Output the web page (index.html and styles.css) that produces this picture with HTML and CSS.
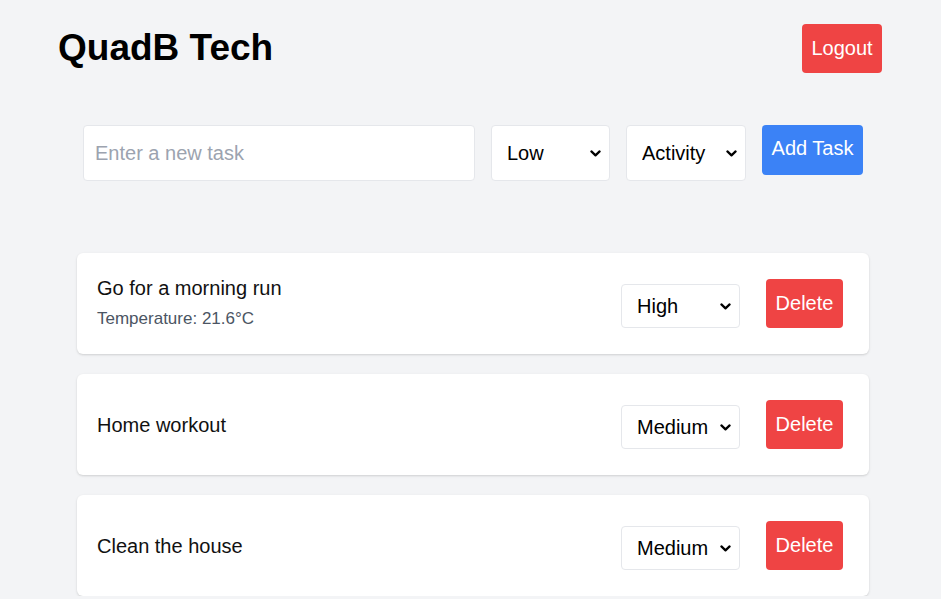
FILE: index.html
```html
<!DOCTYPE html>
<html lang="en">
<head>
<meta charset="utf-8">
<title>QuadB Tech</title>
<link rel="stylesheet" href="styles.css">
</head>
<body>
<div class="page">
  <header class="header">
    <h1 class="title">QuadB Tech</h1>
    <button class="btn btn-red btn-logout">Logout</button>
  </header>

  <form class="task-form" onsubmit="return false">
    <input class="task-input" type="text" placeholder="Enter a new task">
    <select class="select select-lg select-priority">
      <option>Low</option>
      <option>Medium</option>
      <option>High</option>
    </select>
    <select class="select select-lg select-type">
      <option>Activity</option>
      <option>Chore</option>
    </select>
    <button class="btn btn-blue" type="button">Add Task</button>
  </form>

  <ul class="task-list">
    <li class="task-card">
      <div class="task-info task-info-two">
        <div class="task-name">Go for a morning run</div>
        <div class="task-meta">Temperature: 21.6°C</div>
      </div>
      <div class="task-actions">
        <select class="select select-sm">
          <option>Low</option>
          <option>Medium</option>
          <option selected>High</option>
        </select>
        <button class="btn btn-red btn-delete">Delete</button>
      </div>
    </li>
    <li class="task-card">
      <div class="task-info">
        <div class="task-name">Home workout</div>
      </div>
      <div class="task-actions">
        <select class="select select-sm">
          <option>Low</option>
          <option selected>Medium</option>
          <option>High</option>
        </select>
        <button class="btn btn-red btn-delete">Delete</button>
      </div>
    </li>
    <li class="task-card">
      <div class="task-info">
        <div class="task-name">Clean the house</div>
      </div>
      <div class="task-actions">
        <select class="select select-sm">
          <option>Low</option>
          <option selected>Medium</option>
          <option>High</option>
        </select>
        <button class="btn btn-red btn-delete">Delete</button>
      </div>
    </li>
  </ul>
</div>
</body>
</html>
```

FILE: styles.css
```css
* {
  box-sizing: border-box;
}

html, body {
  margin: 0;
  padding: 0;
  background: #f3f4f6;
  font-family: "Liberation Sans", Arial, sans-serif;
  color: #000;
}

.page {
  padding: 24px 59px 0 58px;
}

.header {
  display: flex;
  justify-content: space-between;
  align-items: flex-start;
}

.title {
  margin: 4px 0 0 0;
  font-size: 37px;
  line-height: 40px;
  font-weight: 700;
  color: #000;
}

.btn {
  border: none;
  border-radius: 4px;
  font-family: "Liberation Sans", Arial, sans-serif;
  font-size: 20px;
  line-height: 29px;
  padding: 10px 10px;
  color: #fff;
  cursor: pointer;
  white-space: nowrap;
}

.btn-red {
  background: #ef4444;
}

.btn-logout {
  width: 80px;
  padding: 10px 0;
}

.btn-delete {
  width: 77px;
  padding: 10px 0;
}

.btn-blue {
  background: #3b82f6;
  height: 50px;
  width: 101px;
  padding: 0 0 3px;
}

.task-form {
  display: flex;
  align-items: flex-start;
  gap: 16px;
  margin: 52px 19px 0 25px;
}

.task-input {
  flex: 1;
  height: 56px;
  border: 1px solid #e5e7eb;
  border-radius: 4px;
  background: #fff;
  padding: 0 11px;
  font-family: "Liberation Sans", Arial, sans-serif;
  font-size: 20px;
  color: #000;
  outline: none;
}

.task-input::placeholder {
  color: #9ca3af;
}

.select {
  appearance: none;
  -webkit-appearance: none;
  background-color: #fff;
  background-image: url("data:image/svg+xml;utf8,<svg xmlns='http://www.w3.org/2000/svg' width='11' height='7' viewBox='0 0 11 7'><path d='M1.4 1.4 L5.5 5.4 L9.6 1.4' fill='none' stroke='black' stroke-width='2.2' stroke-linecap='round' stroke-linejoin='round'/></svg>");
  background-repeat: no-repeat;
  background-position: right 8px center;
  background-size: 11px 7px;
  border: 1px solid #e5e7eb;
  border-radius: 4px;
  padding: 0 0 0 15px;
  font-family: "Liberation Sans", Arial, sans-serif;
  font-size: 20px;
  color: #000;
  outline: none;
}

.select-lg {
  height: 56px;
}

.select-priority {
  width: 119px;
}

.select-type {
  width: 120px;
}

.select-sm {
  height: 44px;
  width: 119px;
  margin-top: 5px;
}

.task-list {
  list-style: none;
  margin: 72px 13px 0 19px;
  padding: 0;
  display: flex;
  flex-direction: column;
  gap: 20px;
}

.task-card {
  height: 101px;
  background: #fff;
  border-radius: 6px;
  box-shadow: 0 1px 3px rgba(0, 0, 0, 0.1), 0 1px 2px rgba(0, 0, 0, 0.06);
  display: flex;
  align-items: center;
  justify-content: space-between;
  padding: 0 26px 0 20px;
}

.task-info-two {
  margin-bottom: 2px;
}

.task-name {
  font-size: 20px;
  line-height: 28px;
  color: #111;
}

.task-meta {
  margin-top: 5px;
  font-size: 17px;
  line-height: 24px;
  color: #4b5563;
}

.task-actions {
  display: flex;
  align-items: center;
  gap: 26px;
}
```
